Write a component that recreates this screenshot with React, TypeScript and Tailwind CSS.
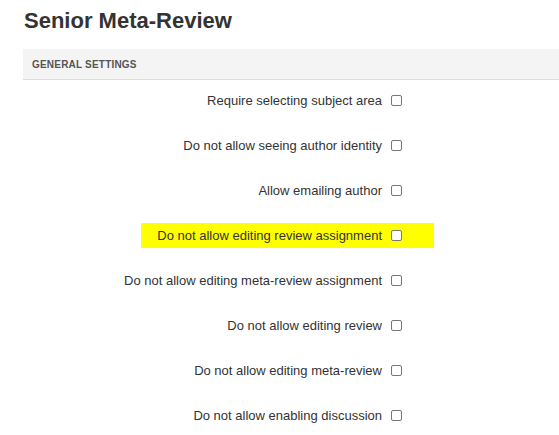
const settings = [
  { label: "Require selecting subject area" },
  { label: "Do not allow seeing author identity" },
  { label: "Allow emailing author" },
  { label: "Do not allow editing review assignment", highlight: true },
  { label: "Do not allow editing meta-review assignment" },
  { label: "Do not allow editing review" },
  { label: "Do not allow editing meta-review" },
  { label: "Do not allow enabling discussion" },
];

const App = () => {
  return (
    <div className="min-h-[435px] bg-white text-[#333] font-['Liberation_Sans',Arial,sans-serif]">
      <h1 className="pl-[24px] pt-[8px] text-[22px] font-bold leading-[26px] text-[#333]">Senior Meta-Review</h1>
      <div className="ml-[23px] mt-[15px]">
        <div className="flex h-[31px] items-center border-b border-[#dddddd] bg-[#f4f4f4] pl-[9px]">
          <span className="text-[10px] font-bold uppercase tracking-[0.2px] text-[#555]">General Settings</span>
        </div>
        <ul className="-mt-[2px] w-[379px]">
          {settings.map((s) => (
            <li key={s.label} className="flex h-[45px] items-center justify-end">
              <div
                className={
                  s.highlight
                    ? "flex h-[25px] items-center bg-[#ffff00] pl-[16px] pr-[32px] -mr-[32px]"
                    : "flex items-center"
                }
              >
                <span className="text-[13px] leading-none">{s.label}</span>
                <span className="ml-[9px] h-[11px] w-[11px] rounded-[2px] border border-[#777] bg-white" />
              </div>
            </li>
          ))}
        </ul>
      </div>
    </div>
  );
};

export default App;
